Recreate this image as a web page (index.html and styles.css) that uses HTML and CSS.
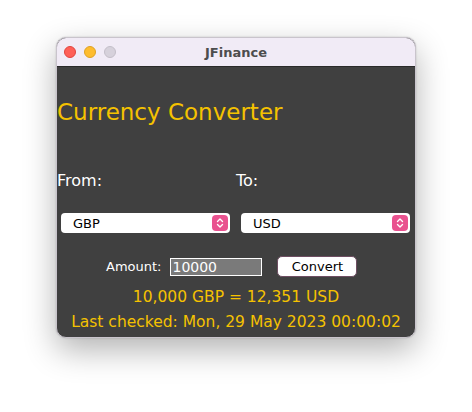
FILE: index.html
```html
<!DOCTYPE html>
<html>
<head>
<meta charset="utf-8">
<link rel="stylesheet" href="styles.css">
</head>
<body>
<div class="window">
  <div class="titlebar">
    <div class="lights">
      <span class="light red"></span>
      <span class="light yellow"></span>
      <span class="light gray"></span>
    </div>
    <div class="wtitle">JFinance</div>
  </div>
  <div class="content">
    <h1 class="heading">Currency Converter</h1>
    <div class="labels">
      <div class="lab">From:</div>
      <div class="lab">To:</div>
    </div>
    <div class="selects">
      <div class="select"><span class="sval">GBP</span><span class="stepper"><svg width="16" height="16" viewBox="0 0 16 16"><path d="M5.5 6.5 L8 4 L10.5 6.5 M5.5 9.5 L8 12 L10.5 9.5" fill="none" stroke="#fff" stroke-width="1.4" stroke-linecap="round" stroke-linejoin="round"/></svg></span></div>
      <div class="select"><span class="sval">USD</span><span class="stepper"><svg width="16" height="16" viewBox="0 0 16 16"><path d="M5.5 6.5 L8 4 L10.5 6.5 M5.5 9.5 L8 12 L10.5 9.5" fill="none" stroke="#fff" stroke-width="1.4" stroke-linecap="round" stroke-linejoin="round"/></svg></span></div>
    </div>
    <div class="amountrow">
      <span class="amtlabel">Amount:</span>
      <span class="amtinput">10000</span>
      <span class="btn">Convert</span>
    </div>
    <div class="result">10,000 GBP = 12,351 USD</div>
    <div class="result last">Last checked: Mon, 29 May 2023 00:00:02</div>
  </div>
</div>
</body>
</html>
```

FILE: styles.css
```css
html, body {
  margin: 0;
  padding: 0;
  background: #ffffff;
}
body {
  padding: 37px 0 0 56px;
  min-height: 412px;
  box-sizing: border-box;
  font-family: "DejaVu Sans", "Liberation Sans", sans-serif;
}
.window {
  width: 360px;
  height: 301px;
  border-radius: 10px;
  overflow: hidden;
  box-sizing: border-box;
  border: 1px solid #c9c4cc;
  box-shadow: 0 12px 32px rgba(0,0,0,0.3), 0 0 2px rgba(0,0,0,0.2);
  display: flex;
  flex-direction: column;
  background: #404040;
}
.titlebar {
  height: 28px;
  background: #f1ebf6;
  border-bottom: 1px solid #2a2a2a;
  display: flex;
  align-items: center;
  position: relative;
  flex: none;
}
.lights {
  display: flex;
  gap: 8px;
  padding-left: 7px;
}
.light {
  width: 12px;
  height: 12px;
  border-radius: 50%;
  box-sizing: border-box;
}
.red { background: #fe5f57; border: 0.5px solid #e0443e; }
.yellow { background: #febc2e; border: 0.5px solid #dea123; }
.gray { background: #d6d1db; border: 0.5px solid #c3bec8; }
.wtitle {
  position: absolute;
  left: 0;
  right: 0;
  text-align: center;
  font-size: 13px;
  font-weight: bold;
  color: #4d4d4d;
  pointer-events: none;
}
.content {
  flex: 1;
  display: flex;
  flex-direction: column;
  padding: 0;
}
.heading {
  margin: 32px 0 0 0;
  padding-left: 0;
  font-weight: normal;
  font-size: 23px;
  line-height: 26px;
  color: #f5c200;
}
.labels {
  display: flex;
  margin-top: 46px;
}
.lab {
  width: 179px;
  font-size: 16px;
  line-height: 20px;
  color: #ffffff;
}
.selects {
  display: flex;
  gap: 11px;
  margin-top: 22px;
  padding-left: 4px;
}
.select {
  width: 169px;
  height: 20px;
  background: #ffffff;
  border-radius: 4px;
  display: flex;
  align-items: center;
  justify-content: space-between;
  box-sizing: border-box;
  padding: 0 2px 0 12px;
}
.sval {
  font-size: 13px;
  color: #000;
}
.stepper {
  width: 16px;
  height: 16px;
  background: #e9528f;
  border-radius: 4px;
  display: flex;
}
.amountrow {
  display: flex;
  align-items: center;
  margin-top: 23px;
  padding-left: 49px;
  height: 21px;
}
.amtlabel {
  font-size: 13px;
  color: #ffffff;
  margin-right: 9px;
}
.amtinput {
  width: 92px;
  height: 18px;
  box-sizing: border-box;
  border: 1px solid #ffffff;
  background: #7a7a7a;
  color: #ffffff;
  font-size: 14px;
  line-height: 16px;
  padding-left: 1px;
}
.btn {
  margin-left: 15px;
  width: 80px;
  height: 21px;
  box-sizing: border-box;
  background: #ffffff;
  border: 1.5px solid #6e4e62;
  border-radius: 5px;
  font-size: 13px;
  color: #000;
  display: flex;
  align-items: center;
  justify-content: center;
}
.result {
  text-align: center;
  font-size: 15.5px;
  line-height: 20px;
  color: #f5c200;
  margin-top: 10px;
}
.result.last {
  margin-top: 5px;
}
```
